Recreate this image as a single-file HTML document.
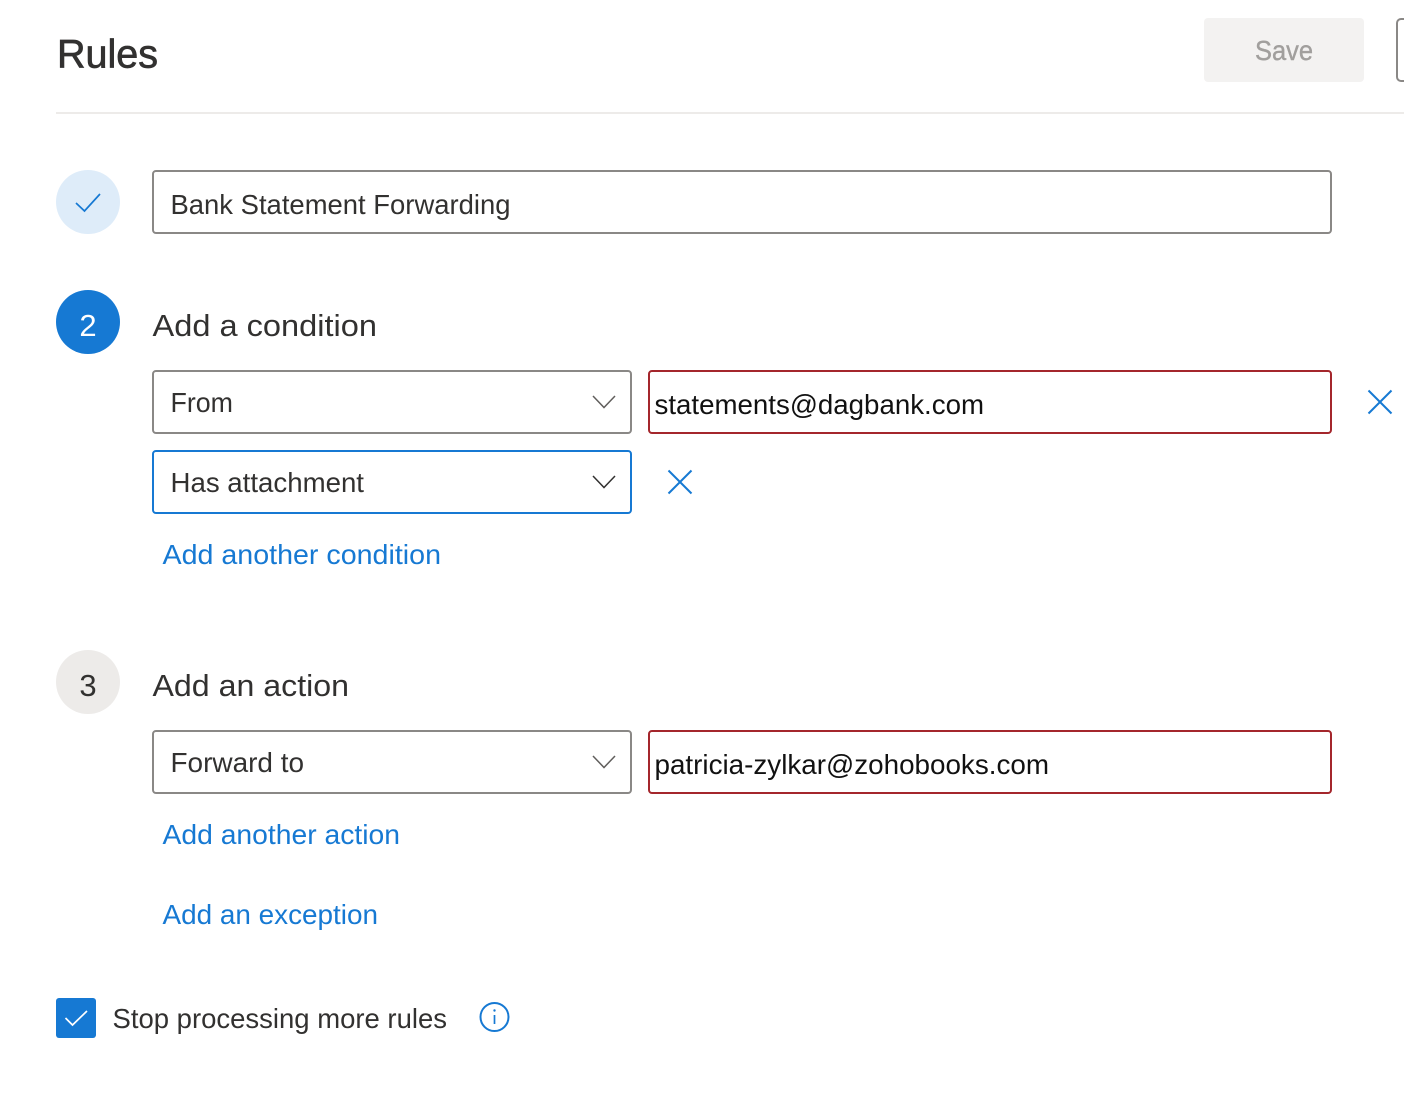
<!DOCTYPE html>
<html lang="en">
<head>
<meta charset="utf-8">
<title>Rules</title>
<style>
html,body{margin:0;padding:0;background:#fff;width:1404px;height:1104px;overflow:hidden}
svg{display:block}
text{font-family:"Liberation Sans",sans-serif;font-size:28px;fill:#323130}
.link{fill:#1679d3}
.head{font-size:31px}
.val{fill:#111}
.box{fill:#fff;stroke:#8a8886;stroke-width:2}
.err{fill:#fff;stroke:#a4262c;stroke-width:2}
.ic{fill:none;stroke:#1679d3;stroke-width:1.7}
</style>
</head>
<body>
<svg width="1404" height="1104" viewBox="0 0 1404 1104" xmlns="http://www.w3.org/2000/svg">
<rect width="1404" height="1104" fill="#fff"/>

<text x="57" y="67.5" style="font-size:40px;stroke:#323130;stroke-width:.7" textLength="101" lengthAdjust="spacingAndGlyphs">Rules</text>
<rect x="1204" y="18" width="160" height="64" rx="4" fill="#f3f2f1"/>
<text x="1255" y="60" style="fill:#a19f9d;stroke:#a19f9d;stroke-width:.4" textLength="58" lengthAdjust="spacingAndGlyphs">Save</text>
<rect x="1397" y="19" width="40" height="62" rx="4" class="box"/>
<rect x="56" y="112" width="1348" height="2" fill="#edebe9"/>

<circle cx="88" cy="202" r="32" fill="#deecf9"/>
<path d="M76 203L84.5 211L100 194" class="ic"/>
<rect x="153" y="171" width="1178" height="62" rx="3" class="box"/>
<text x="170.5" y="214" textLength="340" lengthAdjust="spacingAndGlyphs">Bank Statement Forwarding</text>

<circle cx="88" cy="322" r="32" fill="#1679d3"/>
<text x="88" y="336" text-anchor="middle" style="font-size:31px;fill:#fff">2</text>
<text x="152.5" y="336" class="head" textLength="224.5" lengthAdjust="spacingAndGlyphs">Add a condition</text>

<rect x="153" y="371" width="478" height="62" rx="3" class="box"/>
<text x="170.5" y="412" textLength="62.5" lengthAdjust="spacingAndGlyphs">From</text>
<path d="M593 396L604 407.5L615 396" fill="none" stroke="#605e5c" stroke-width="1.5"/>
<rect x="649" y="371" width="682" height="62" rx="3" class="err"/>
<text x="654.5" y="414" class="val" textLength="329.5" lengthAdjust="spacingAndGlyphs">statements@dagbank.com</text>
<path d="M1368.5 390.5L1391.5 413.5M1391.5 390.5L1368.5 413.5" class="ic" style="stroke-width:2"/>

<rect x="153" y="451" width="478" height="62" rx="3" fill="#fff" stroke="#1679d3" stroke-width="2"/>
<text x="170.5" y="492" textLength="193.5" lengthAdjust="spacingAndGlyphs">Has attachment</text>
<path d="M593 476L604 487.5L615 476" fill="none" stroke="#323130" stroke-width="1.5"/>
<path d="M668.5 470.5L691.5 493.5M691.5 470.5L668.5 493.5" class="ic" style="stroke-width:2"/>

<text x="162.5" y="564" class="link" textLength="278.5" lengthAdjust="spacingAndGlyphs">Add another condition</text>

<circle cx="88" cy="682" r="32" fill="#edebe9"/>
<text x="88" y="696" text-anchor="middle" style="font-size:31px">3</text>
<text x="152.5" y="696" class="head" textLength="196.5" lengthAdjust="spacingAndGlyphs">Add an action</text>

<rect x="153" y="731" width="478" height="62" rx="3" class="box"/>
<text x="170.5" y="772" textLength="133.5" lengthAdjust="spacingAndGlyphs">Forward to</text>
<path d="M593 756L604 767.5L615 756" fill="none" stroke="#605e5c" stroke-width="1.5"/>
<rect x="649" y="731" width="682" height="62" rx="3" class="err"/>
<text x="654.5" y="774" class="val" textLength="394.5" lengthAdjust="spacingAndGlyphs">patricia-zylkar@zohobooks.com</text>

<text x="162.5" y="844" class="link" textLength="237.5" lengthAdjust="spacingAndGlyphs">Add another action</text>
<text x="162.5" y="924" class="link" textLength="215.5" lengthAdjust="spacingAndGlyphs">Add an exception</text>

<rect x="56" y="998" width="40" height="40" rx="3" fill="#1679d3"/>
<path d="M65.5 1018L72.5 1025L87 1011" fill="none" stroke="#fff" stroke-width="1.7"/>
<text x="112.5" y="1028" textLength="334.5" lengthAdjust="spacingAndGlyphs">Stop processing more rules</text>
<circle cx="494.5" cy="1017" r="14" class="ic" style="stroke-width:2"/>
<path d="M494.5 1015V1024" class="ic"/>
<circle cx="494.5" cy="1010.5" r="1.2" fill="#1679d3"/>
</svg>
</body>
</html>
